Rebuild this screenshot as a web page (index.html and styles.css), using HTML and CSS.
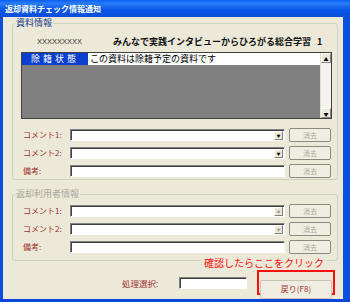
FILE: index.html
```html
<!DOCTYPE html>
<html lang="ja">
<head>
<meta charset="UTF-8">
<meta name="viewport" content="width=device-width, initial-scale=1.0">
<title>返却資料チェック情報通知</title>
<link rel="stylesheet" href="styles.css">
</head>
<body>
    <div class="window">
        <div class="titlebar">返却資料チェック情報通知</div>
        <div class="client">
            <fieldset class="group">
                <legend>資料情報</legend>
                <div class="book-row">
                    <span class="book-code">XXXXXXXXX</span>
                    <span class="book-title">みんなで実践インタビューからひろがる総合学習<span class="vol">1</span></span>
                </div>
                <div class="listbox">
                    <div class="list-main">
                        <div class="list-head">
                            <span class="head-key">除籍状態</span>
                            <span class="head-val">この資料は除籍予定の資料です</span>
                        </div>
                    </div>
                    <div class="scrollbar">
                        <span class="arrow">▲</span>
                        <span class="arrow">▼</span>
                    </div>
                </div>
                <div class="rows">
                    <div class="field-row">
                        <label>コメント1:</label>
                        <div class="combo"><span class="drop">▼</span></div>
                        <button class="clear-btn">消去</button>
                    </div>
                    <div class="field-row">
                        <label>コメント2:</label>
                        <div class="combo"><span class="drop">▼</span></div>
                        <button class="clear-btn">消去</button>
                    </div>
                    <div class="field-row">
                        <label>備考:</label>
                        <div class="textbox"></div>
                        <button class="clear-btn">消去</button>
                    </div>
                </div>
            </fieldset>

            <fieldset class="group group-off">
                <legend>返却利用者情報</legend>
                <div class="rows">
                    <div class="field-row">
                        <label>コメント1:</label>
                        <div class="combo"><span class="drop">▼</span></div>
                        <button class="clear-btn">消去</button>
                    </div>
                    <div class="field-row">
                        <label>コメント2:</label>
                        <div class="combo"><span class="drop">▼</span></div>
                        <button class="clear-btn">消去</button>
                    </div>
                    <div class="field-row">
                        <label>備考:</label>
                        <div class="textbox"></div>
                        <button class="clear-btn">消去</button>
                    </div>
                </div>
            </fieldset>

            <div class="note">確認したらここをクリック</div>

            <div class="bottom-row">
                <label>処理選択:</label>
                <div class="textbox small"></div>
                <div class="highlight"><button class="back-btn">戻り(F8)</button></div>
            </div>
        </div>
    </div>
</body>
</html>
```

FILE: styles.css
```css
html,
body {
    margin: 0;
    width: 350px;
    height: 302px;
    overflow: hidden;
    background-color: #0a46d8;
    font-family: "Noto Sans CJK JP", "Noto Sans", sans-serif;
}

.window {
    height: 299px;
    box-sizing: border-box;
    border-left: 3px solid #0a4fe0;
    border-right: 7px solid #0a4fe0;
    display: flex;
    flex-direction: column;
}

.titlebar {
    height: 17px;
    flex-shrink: 0;
    line-height: 17px;
    margin-left: -3px;
    margin-right: -7px;
    padding-left: 5px;
    color: white;
    font-size: 8px;
    font-weight: bold;
    background: linear-gradient(#0a5ff5, #2a7cf4 20%, #0756e6 60%, #0a4ed8);
}

.client {
    flex: 1;
    min-height: 0;
    overflow: hidden;
    background-color: #ece9d8;
    position: relative;
}

.group {
    box-sizing: border-box;
    height: 163px;
    margin: 0 5px 0 9px;
    padding: 0 0 0 2px;
    border: 1px solid #d0d0bf;
    border-radius: 3px;
    min-width: 0;
}

.group legend {
    padding: 0 1px;
    font-size: 9px;
    line-height: 12px;
    height: 12px;
    color: #1a3c8c;
}

.group-off {
    height: 73px;
    margin-top: 8px;
}

.group-off legend {
    color: #a8a8a0;
}

.book-row {
    margin-top: 6px;
    height: 12px;
    display: flex;
    align-items: center;
}

.book-code {
    margin-left: 22px;
    width: 76px;
    font-family: "Liberation Sans", sans-serif;
    font-size: 7.5px;
    color: #333;
}

.book-title {
    font-size: 9px;
    font-weight: bold;
    color: #111;
}

.vol {
    margin-left: 6px;
}

.listbox {
    margin: 5px 0 0 6px;
    width: 311px;
    height: 67px;
    box-sizing: border-box;
    border: 1px solid #404040;
    display: flex;
}

.list-main {
    flex: 1;
    background-color: #808080;
}

.list-head {
    display: flex;
    height: 12px;
    line-height: 12px;
    font-size: 9px;
}

.head-key {
    width: 66px;
    text-align: center;
    letter-spacing: 3px;
    color: white;
    background-color: #0b3fd0;
}

.head-val {
    flex: 1;
    padding-left: 2px;
    background-color: white;
    color: #000;
}

.scrollbar {
    width: 10px;
    background-color: #f4f3ee;
    border-left: 1px solid #e0ded2;
    display: flex;
    flex-direction: column;
    justify-content: space-between;
}

.arrow {
    height: 10px;
    font-size: 5px;
    line-height: 10px;
    text-align: center;
    color: #000;
    background-color: #ece9d8;
    border: 1px solid #fff;
    border-right-color: #888;
    border-bottom-color: #888;
    box-sizing: border-box;
}

.rows {
    margin: 9px 0 0 8px;
    display: flex;
    flex-direction: column;
    gap: 4px;
}

.group-off .rows {
    margin-top: 4px;
}

.field-row {
    height: 14px;
    display: flex;
    align-items: center;
}

.field-row label {
    width: 47px;
    font-size: 8px;
    line-height: 12px;
    color: #a03030;
}

.combo,
.textbox {
    width: 215px;
    height: 12px;
    box-sizing: border-box;
    background-color: white;
    border: 1px solid #fff;
    border-top-color: #808080;
    border-left-color: #808080;
    box-shadow: inset 1px 1px 0 #404040;
    display: flex;
    justify-content: flex-end;
    align-items: center;
}

.drop {
    width: 9px;
    height: 9px;
    margin-right: 1px;
    font-size: 4px;
    line-height: 9px;
    text-align: center;
    color: #000;
    background-color: #ece9d8;
    border: 1px solid #fff;
    border-right-color: #808080;
    border-bottom-color: #808080;
    box-sizing: border-box;
}

.group-off .drop {
    color: #a0a0a0;
}

.clear-btn {
    margin-left: 4px;
    width: 42px;
    height: 14px;
    padding: 0;
    font-family: inherit;
    font-size: 7px;
    line-height: 12px;
    color: #aca899;
    background-color: #f0eee2;
    border: 1px solid #8a8a80;
    border-radius: 2px;
}

.note {
    position: absolute;
    left: 198px;
    top: 240px;
    padding: 0 3px;
    font-size: 10px;
    line-height: 12px;
    color: #ff1010;
    background-color: #ece9d8;
}

.bottom-row {
    margin-top: 9px;
    height: 25px;
    display: flex;
    align-items: center;
}

.bottom-row label {
    margin-left: 119px;
    width: 57px;
    font-size: 8.5px;
    line-height: 12px;
    color: #a03030;
}

.textbox.small {
    width: 68px;
}

.highlight {
    margin-left: 10px;
    width: 78px;
    height: 25px;
    box-sizing: border-box;
    border: 2px solid #ff1010;
    padding: 1px;
}

.back-btn {
    width: 100%;
    height: 100%;
    padding: 0;
    font-family: inherit;
    font-size: 8px;
    line-height: 12px;
    color: #a03030;
    background-color: #f0eee2;
    border: 1px solid #c8c4b0;
    border-radius: 2px;
}
```
